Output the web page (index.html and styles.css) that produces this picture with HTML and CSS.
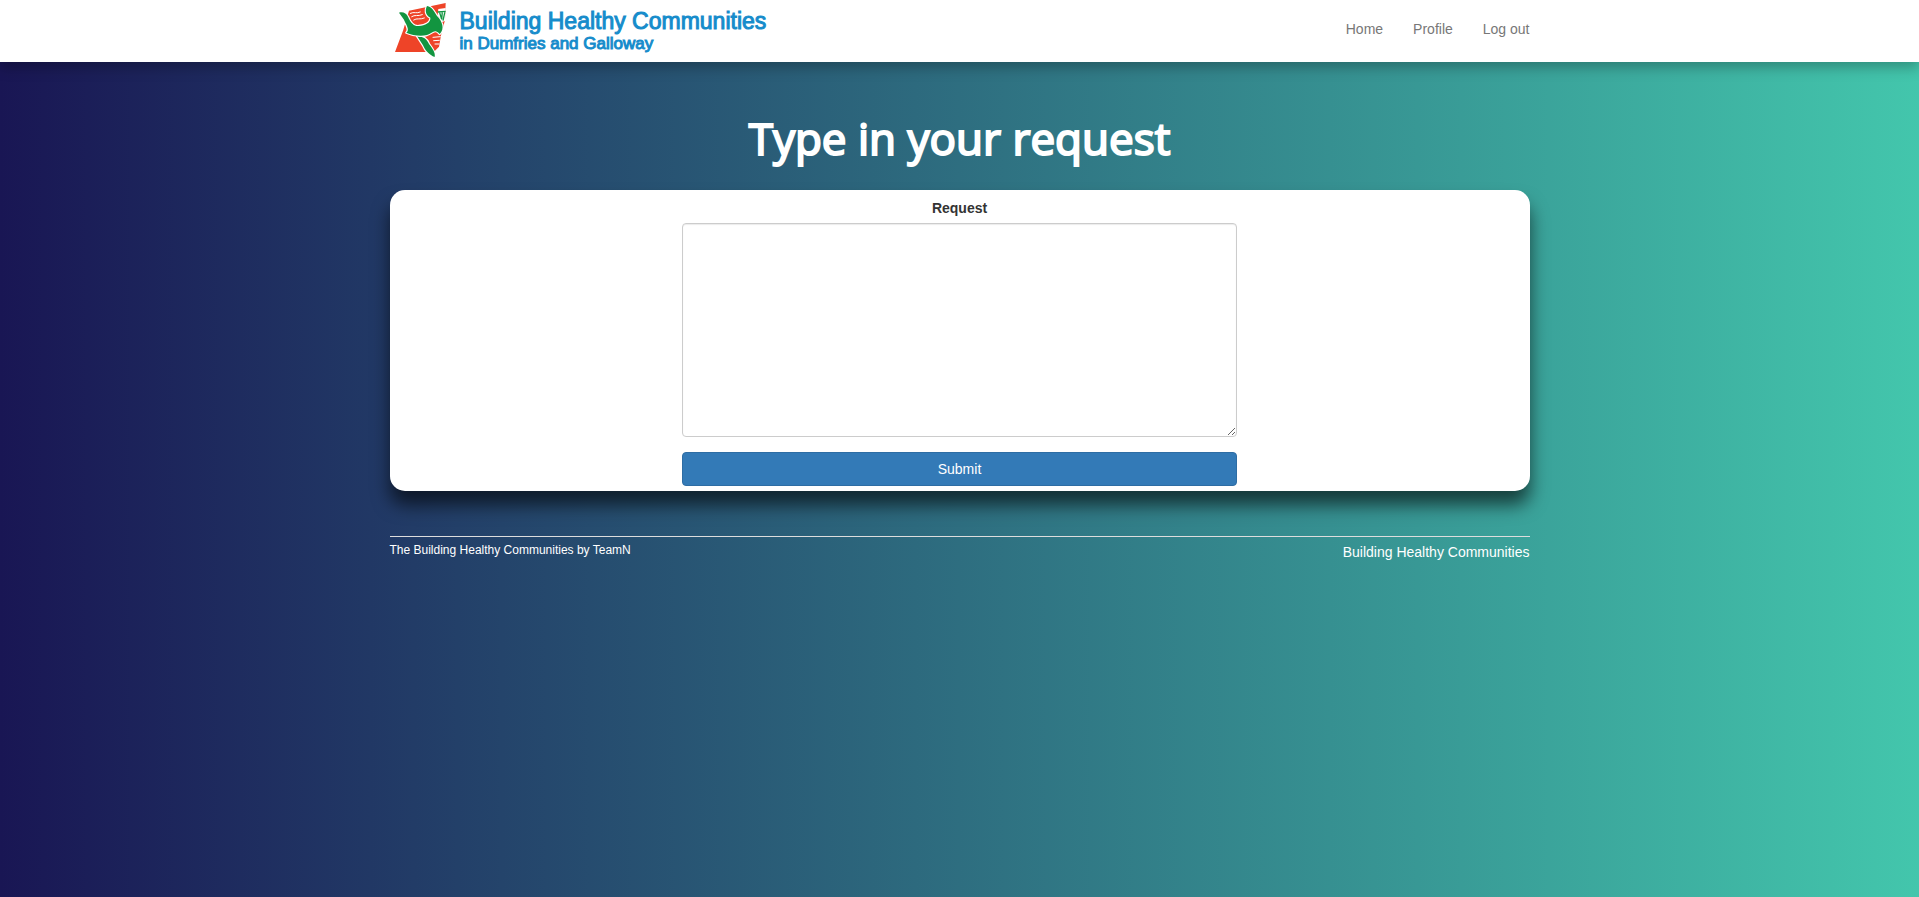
FILE: index.html
```html
<!DOCTYPE html>
<html lang="en">
<head>
<meta charset="utf-8">
<title>Building Healthy Communities</title>
<link rel="stylesheet" href="styles.css">
</head>
<body>
<header class="topbar">
  <div class="container topbar-inner">
    <a class="brand" href="#">
      <svg class="brand-mark" viewBox="0 0 210 186" aria-hidden="true">
        <path fill="#ee4428" d="M72 32 L182 9 L180 60 L168 106 L162 140 L150 152 L128 156 L30 156 L54 92 Z"/>
        <path fill="#fff" d="M160 27 L182 24 L181 62 L172 66 L158 46 Z"/>
        <g fill="#129540" stroke="#fff" stroke-width="7" stroke-linejoin="round" paint-order="stroke">
          <path d="M96 108 C114 108 127 119 132 132 C141 144 152 157 149 171 C134 166 120 151 114 136 Z"/>
          <path d="M42 38 C54 34 64 40 69 50 C76 68 88 80 102 78 C120 76 138 68 136 53 C119 44 121 28 126 18 C141 20 147 34 156 48 C172 64 180 86 164 102 C150 84 142 99 126 105 C106 110 82 106 64 98 C76 90 62 72 56 58 Z"/>
        </g>
        <path fill="none" stroke="#fff" stroke-width="3" stroke-linecap="round" d="M76 40 C88 34 94 42 106 36 M80 50 C90 43 98 50 112 44 M86 60 C96 53 104 60 118 54 M144 112 L166 110 M146 122 L163 121 M150 132 L162 132"/>
        <path fill="none" stroke="#129540" stroke-width="4" d="M158 36 L182 34 M164 38 L170 58 M172 34 L170 58 M180 34 L174 62"/>
      </svg>
      <span class="brand-text">
        <span class="brand-name">Building Healthy Communities</span>
        <span class="brand-place">in Dumfries and Galloway</span>
      </span>
    </a>
    <nav class="menu">
      <a href="#">Home</a>
      <a href="#">Profile</a>
      <a href="#">Log out</a>
    </nav>
  </div>
</header>
<main class="container">
  <h1 class="title">Type in your request</h1>
  <form class="card">
    <label class="label" for="request">Request</label>
    <textarea class="request" id="request" rows="10"></textarea>
    <button class="submit" type="submit">Submit</button>
  </form>
</main>
<footer class="container">
  <div class="footer-inner">
    <small class="credit">The Building Healthy Communities by TeamN</small>
    <a class="footer-link" href="#">Building Healthy Communities</a>
  </div>
</footer>
</body>
</html>
```
FILE: styles.css
```css
* { box-sizing: border-box; }

html { min-height: 100%; background: linear-gradient(to right, #191654, #43c6ac); }

body {
  margin: 0;
  font: 14px/20px "Liberation Sans", Arial, sans-serif;
  color: #333;
}

a { text-decoration: none; }

.container { width: 100%; max-width: 1140px; margin: 0 auto; }

.topbar {
  background: #fff;
  box-shadow: 0 6px 12px rgba(0, 0, 0, 0.25);
}

.topbar-inner { display: flex; justify-content: space-between; height: 62px; }

.brand { display: flex; color: #168ccb; }

.brand-mark { width: 70px; height: 62px; margin-left: -5px; }

.brand-text {
  display: flex;
  flex-direction: column;
  padding: 9px 0 0 5px;
  -webkit-text-stroke: 1px #168ccb;
  white-space: nowrap;
}

.brand-name { font-size: 23px; line-height: 24px; }

.brand-place { font-size: 17px; line-height: 21px; }

.menu { display: flex; gap: 30px; padding-top: 19px; }

.menu a { color: #777; }

.title {
  margin: 52px 0 27px;
  font: 44px/49px "Open Sans", "Noto Sans", sans-serif;
  -webkit-text-stroke: 2px #fff;
  color: #fff;
  text-align: center;
}

.card {
  display: flex;
  flex-direction: column;
  align-items: center;
  padding: 8px 15px 5px;
  border-radius: 15px;
  background: #fff;
  box-shadow: 0 14px 18px rgba(0, 0, 0, 0.6);
}

.label { margin-bottom: 5px; font-weight: bold; }

.request,
.submit {
  width: 50%;
  padding: 6px 12px;
  border: 1px solid #ccc;
  border-radius: 4px;
  font: inherit;
}

.request {
  height: 214px;
  margin-bottom: 15px;
  color: #555;
  background: #fff;
  box-shadow: inset 0 1px 1px rgba(0, 0, 0, 0.08);
  resize: vertical;
}

.submit { border-color: #2e6da4; color: #fff; background: #337ab7; }

.footer-inner {
  display: flex;
  justify-content: space-between;
  margin-top: 45px;
  padding-top: 5px;
  border-top: 1px solid #ddd;
  color: #fff;
}

.credit { font-size: 12px; line-height: 17px; }

.footer-link { color: #fff; }
```
